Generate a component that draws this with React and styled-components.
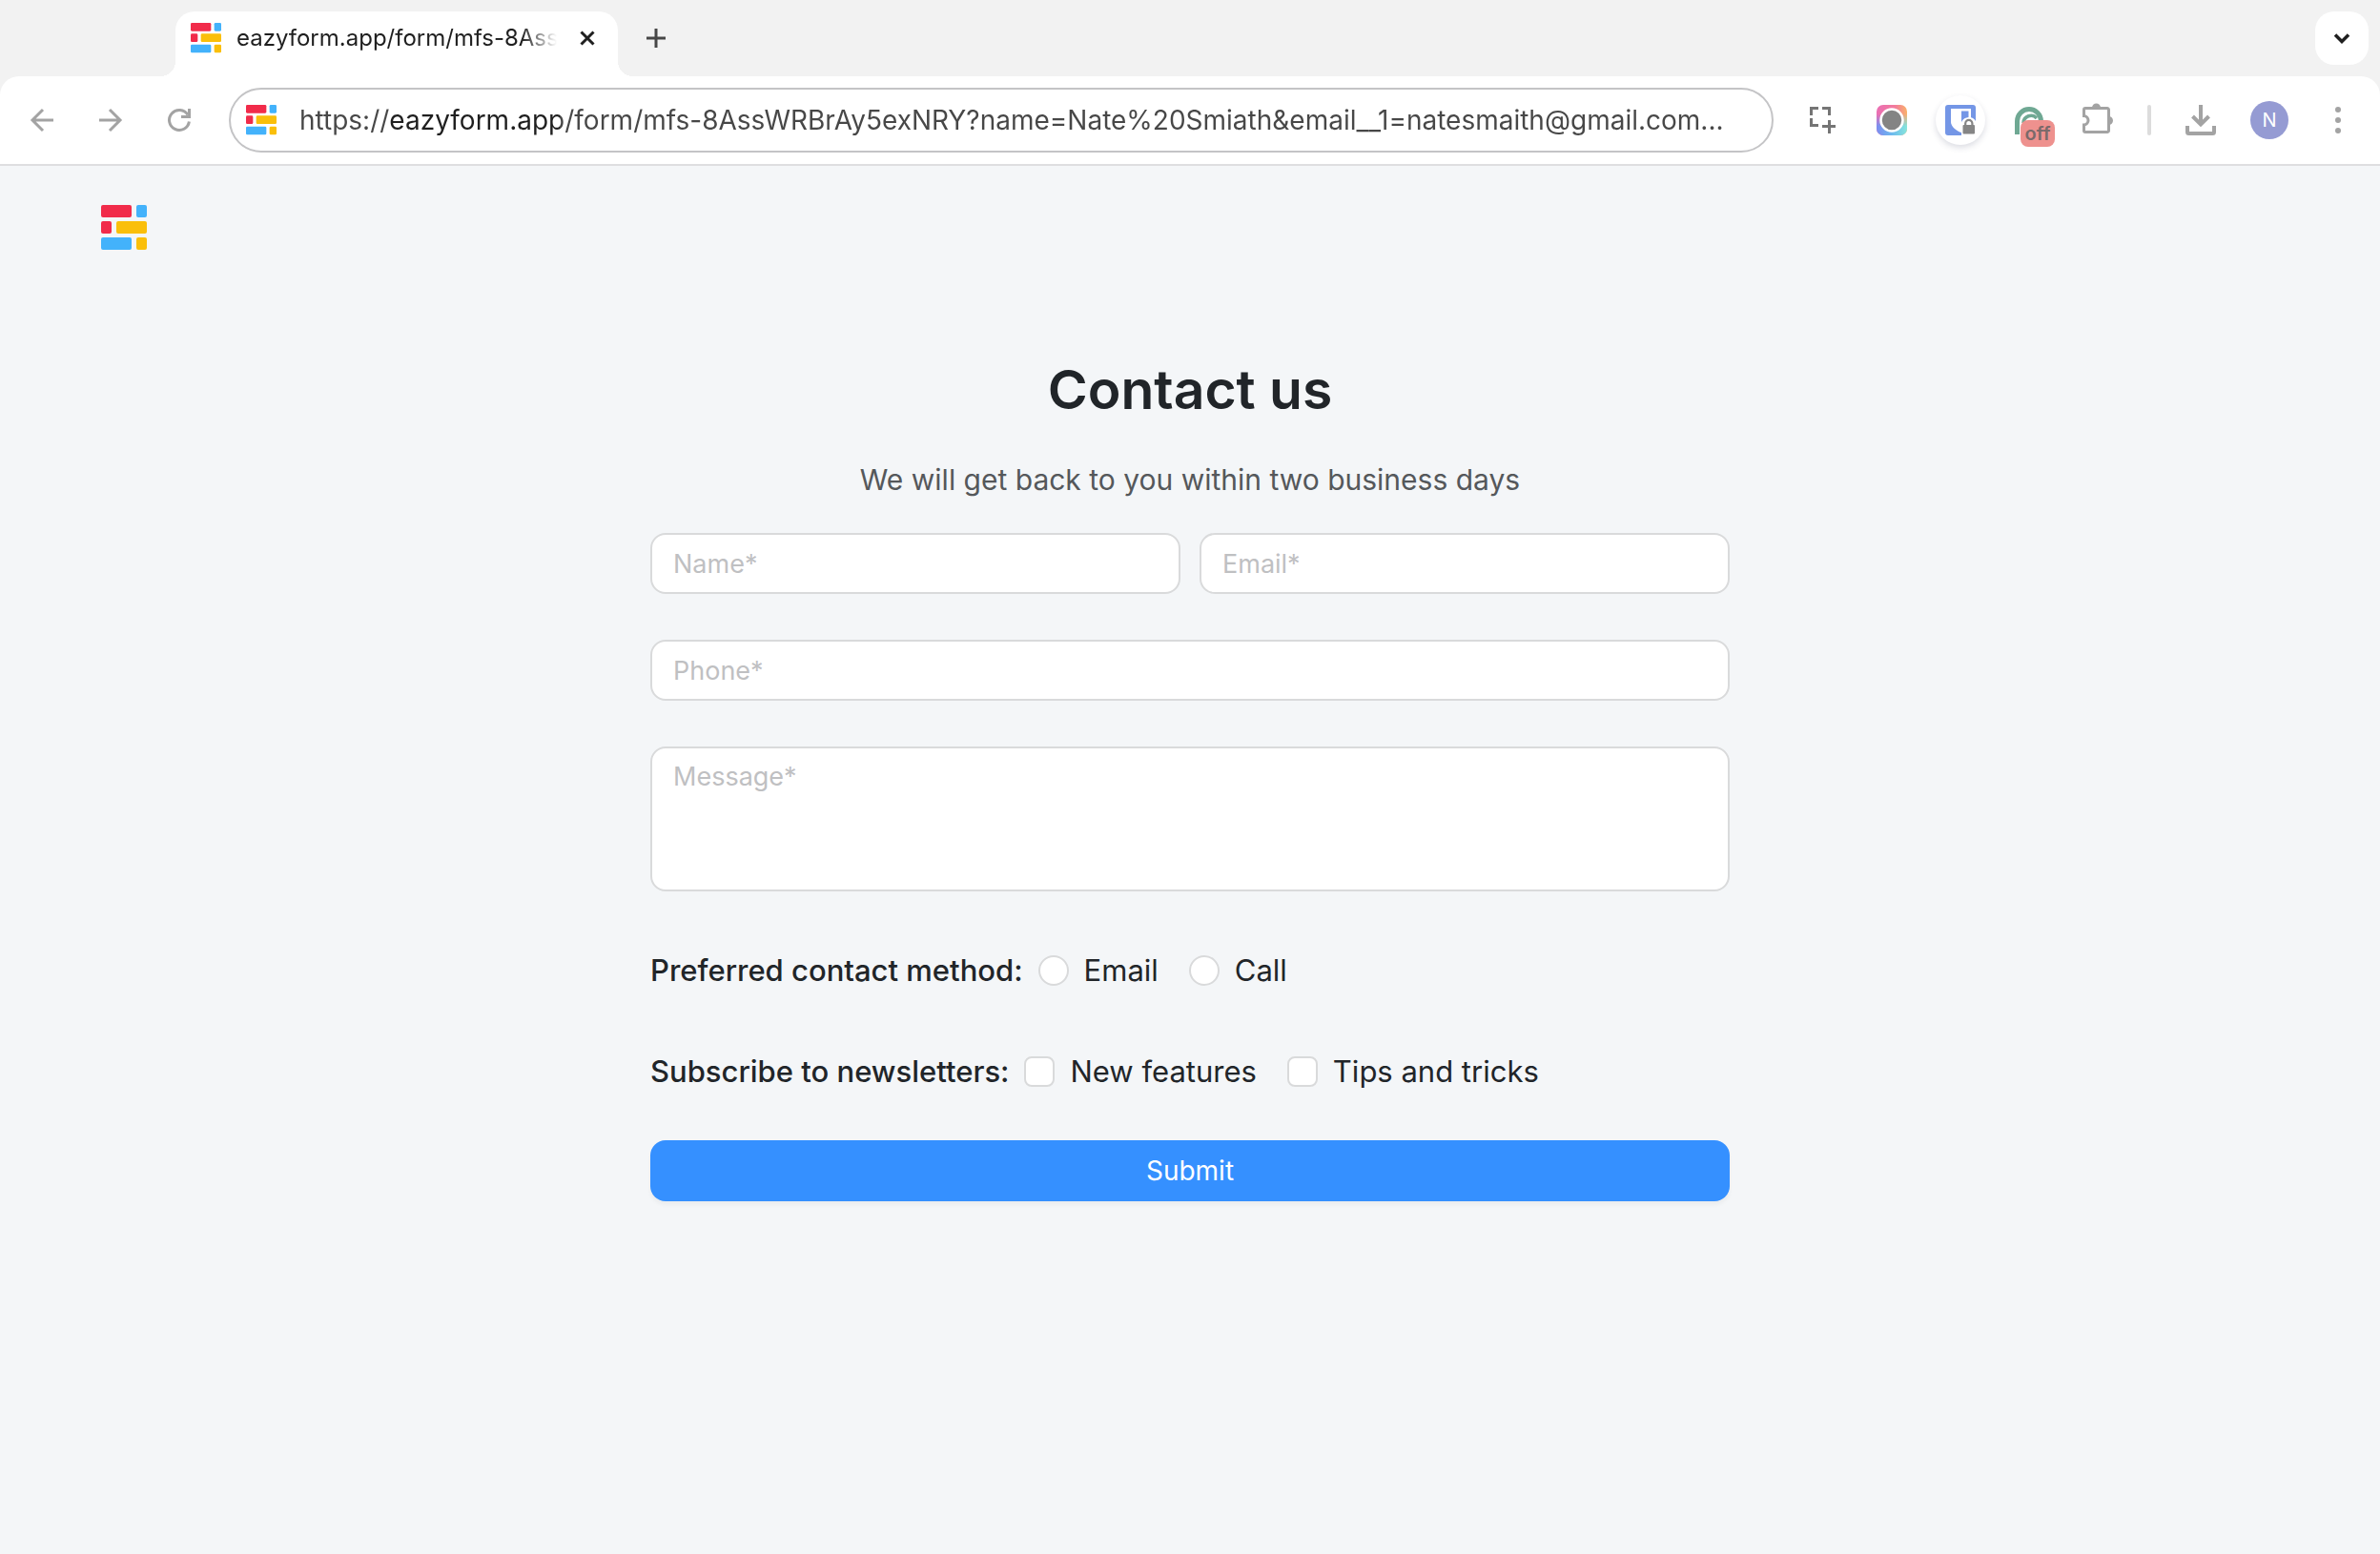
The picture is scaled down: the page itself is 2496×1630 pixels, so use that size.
import React, { useState } from 'react';
import styled, { createGlobalStyle } from 'styled-components';

const GlobalStyle = createGlobalStyle`
  * {
    box-sizing: border-box;
  }

  body {
    margin: 0;
    background-color: #f4f6f8;
    color: #212529;
    font-family: Inter, "Liberation Sans", sans-serif;
  }

  input, textarea, button {
    font-family: inherit;
  }
`;

/* ---------- browser bar ---------- */

const Browser = styled.header`
  background-color: #f2f2f2;
`;

const TabStrip = styled.div`
  display: flex;
  align-items: center;
  height: 80px;
  padding: 0 12px 0 184px;
`;

const Tab = styled.div`
  position: relative;
  align-self: flex-end;
  display: flex;
  align-items: center;
  width: 464px;
  height: 68px;
  padding: 0 16px 12px;
  border-radius: 20px 20px 0 0;
  background-color: #fff;

  &::before,
  &::after {
    content: "";
    position: absolute;
    bottom: 0;
    width: 16px;
    height: 16px;
  }

  &::before {
    right: 100%;
    background: radial-gradient(circle at 0 0, transparent 16px, #fff 16px);
  }

  &::after {
    left: 100%;
    background: radial-gradient(circle at 100% 0, transparent 16px, #fff 16px);
  }
`;

const TabTitle = styled.span`
  flex: 1;
  min-width: 0;
  margin: 0 16px;
  overflow: hidden;
  white-space: nowrap;
  font-size: 24px;
  line-height: 32px;
  color: #1f1f1f;
  mask-image: linear-gradient(90deg, #000 89%, transparent);
`;

const IconButton = styled.button`
  display: flex;
  align-items: center;
  justify-content: center;
  flex: none;
  width: ${props => props.$size || 32}px;
  height: ${props => props.$size || 32}px;
  padding: 0;
  border: none;
  border-radius: 50%;
  background: none;
  color: ${props => props.$color || '#a3a3a3'};
  cursor: pointer;

  svg {
    flex: none;
  }
`;

const NewTab = styled(IconButton)`
  margin-left: 24px;
`;

const TabSearch = styled(IconButton)`
  margin-left: auto;
  border-radius: 20px;
  background-color: #fff;
`;

const Toolbar = styled.div`
  display: flex;
  align-items: center;
  height: 94px;
  padding: 0 28px;
  border-bottom: 2px solid #dedee0;
  border-radius: 20px 20px 0 0;
  background-color: #fff;
`;

const Navigation = styled.nav`
  display: flex;
  gap: 40px;
`;

const Address = styled.div`
  flex: 1;
  display: flex;
  align-items: center;
  gap: 24px;
  height: 68px;
  margin: 0 36px;
  padding: 0 16px;
  border: 2px solid #c4c4c6;
  border-radius: 34px;
`;

/* host name is darker than the rest of the url */
const AddressInput = styled.input`
  flex: 1;
  min-width: 0;
  padding: 0;
  border: none;
  outline: none;
  font-size: 28px;
  line-height: 40px;
  color: transparent;
  background: linear-gradient(90deg, #474747 94px, #1f1f1f 94px, #1f1f1f 273px, #474747 273px);
  background-clip: text;
`;

const Extensions = styled.div`
  display: flex;
  align-items: center;
  gap: 40px;
`;

const RoundExtension = styled(IconButton)`
  margin: 0 -10px;
  box-shadow: 0 3px 6px rgba(60, 64, 100, 0.18);
`;

const BadgedExtension = styled(IconButton)`
  position: relative;
`;

const Badge = styled.span`
  position: absolute;
  top: 16px;
  left: 7px;
  width: 36px;
  height: 28px;
  border-radius: 8px;
  background-color: #ee918e;
  color: #7b6a6a;
  font-size: 20px;
  font-weight: 600;
  line-height: 28px;
  text-align: center;
`;

const Separator = styled.span`
  width: 4px;
  height: 32px;
  margin: 0 -4px;
  border-radius: 2px;
  background-color: #dcdcdc;
`;

const Avatar = styled(IconButton)`
  margin: 0 -4px;
  background-color: #959bd3;
  color: #fff;
  font-size: 20px;
`;

/* ---------- form page ---------- */

const Page = styled.main`
  padding: 0 32px 100px;
`;

const PageHeader = styled.div`
  display: flex;
  padding: 41px 74px 0;
`;

const Form = styled.form`
  display: flex;
  flex-direction: column;
  max-width: 1132px;
  margin: 0 auto;
`;

const Title = styled.h1`
  margin: 110px 0 0;
  font-size: 57px;
  font-weight: 600;
  line-height: 72px;
  text-align: center;
`;

const Subtitle = styled.p`
  margin: 38px 0 36px;
  font-size: 30px;
  line-height: 40px;
  text-align: center;
  color: #55585b;
`;

const Fields = styled.div`
  display: grid;
  grid-template-columns: 1fr 1fr;
  column-gap: 20px;
  row-gap: 48px;
`;

const Input = styled.input`
  width: 100%;
  height: 64px;
  grid-column: ${props => (props.$wide ? '1 / -1' : 'auto')};
  padding: 0 22px;
  border: 2px solid #d9dadb;
  border-radius: 16px;
  outline: none;
  background-color: #fff;
  color: inherit;
  font-size: 27px;

  &::placeholder {
    color: #bfc0c2;
    opacity: 1;
  }

  &:focus {
    border-color: #3590ff;
  }
`;

const TextArea = styled(Input)`
  display: block;
  height: 152px;
  padding: 12px 22px;
  line-height: 36px;
  resize: none;
`;

const Choices = styled.fieldset`
  display: flex;
  align-items: center;
  min-width: 0;
  margin: 60px 0 0;
  padding: 0;
  border: none;
  font-size: 31px;
  line-height: 46px;
`;

const Legend = styled.span`
  margin-right: 16px;
  font-weight: 500;
`;

const Choice = styled.label`
  display: flex;
  align-items: center;
  gap: 16px;
  margin-right: 32px;
`;

const Check = styled.input`
  appearance: none;
  width: 32px;
  height: 32px;
  margin: 0;
  border: 2px solid #d9dadb;
  border-radius: ${props => (props.type === 'radio' ? '50%' : '8px')};
  background-color: #fff;

  &:checked {
    border: 9px solid #3590ff;
  }
`;

const Submit = styled.button`
  height: 64px;
  margin-top: 49px;
  border: none;
  border-radius: 16px;
  background-color: #3590ff;
  box-shadow: 0 4px 4px rgba(0, 0, 0, 0.04);
  color: #fff;
  font-size: 28px;
  cursor: pointer;
`;

/* ---------- icons ---------- */

const Logo = ({ size }) => (
  <svg width={size} height={size} viewBox="0 0 48 48" aria-hidden="true">
    <rect x="0" y="0" width="32" height="13" rx="2" fill="#f12b4a" />
    <rect x="37" y="0" width="11" height="13" rx="2" fill="#43b2fb" />
    <rect x="0" y="17" width="11" height="13" rx="2" fill="#f12b4a" />
    <rect x="16" y="17" width="32" height="13" rx="2" fill="#fabf0a" />
    <rect x="0" y="34" width="32" height="13" rx="2" fill="#43b2fb" />
    <rect x="37" y="34" width="11" height="13" rx="2" fill="#fabf0a" />
  </svg>
);

const Stroke = ({ size = 32, width = 3, children }) => (
  <svg
    width={size}
    height={size}
    viewBox="0 0 32 32"
    fill="none"
    stroke="currentColor"
    strokeWidth={width}
    aria-hidden="true"
  >
    {children}
  </svg>
);

const BackIcon = () => (
  <Stroke>
    <path d="M28 16H6M17 5 6 16l11 11" />
  </Stroke>
);

const ForwardIcon = () => (
  <Stroke>
    <path d="M4 16h22M15 5l11 11-11 11" />
  </Stroke>
);

const ReloadIcon = () => (
  <Stroke>
    <path d="M26.400 17.500A10.500 10.500 0 1 1 25 10.500" />
    <path d="M26.500 4v8.500H18" />
  </Stroke>
);

const CloseIcon = () => (
  <Stroke>
    <path d="m9.500 9.500 13 13M22.500 9.500l-13 13" />
  </Stroke>
);

const PlusIcon = () => (
  <Stroke>
    <path d="M16 6v20M6 16h20" />
  </Stroke>
);

const ChevronIcon = () => (
  <Stroke width={3.5}>
    <path d="m9 12.500 7 7 7-7" />
  </Stroke>
);

const CaptureIcon = () => (
  <Stroke>
    <path d="M3.500 11V3.500H11M15 3.500h7.500V11M3.500 14v7.500H11M22.500 16v14M15 22.500h14" />
  </Stroke>
);

const CameraIcon = () => (
  <svg width="32" height="32" viewBox="0 0 32 32" aria-hidden="true">
    <defs>
      <linearGradient id="camTop" x1="0" y1="0" x2="1" y2="0">
        <stop offset="0" stopColor="#ea6fb4" />
        <stop offset="0.6" stopColor="#f27a9c" />
        <stop offset="1" stopColor="#f9b26a" />
      </linearGradient>
      <linearGradient id="camBottom" x1="0" y1="0" x2="1" y2="0">
        <stop offset="0" stopColor="#7d8cf0" />
        <stop offset="0.5" stopColor="#6cb9ee" />
        <stop offset="1" stopColor="#86e6dc" />
      </linearGradient>
      <linearGradient id="camFade" x1="0" y1="0" x2="0" y2="1">
        <stop offset="0.3" stopColor="#fff" stopOpacity="0" />
        <stop offset="0.7" stopColor="#fff" />
      </linearGradient>
      <mask id="camMask">
        <rect width="32" height="32" fill="url(#camFade)" />
      </mask>
    </defs>
    <rect width="32" height="32" rx="7" fill="url(#camTop)" />
    <rect width="32" height="32" rx="7" fill="url(#camBottom)" mask="url(#camMask)" />
    <circle cx="16" cy="16" r="11.500" fill="#848484" stroke="#fff" strokeWidth="2.500" />
  </svg>
);

const ShieldIcon = () => (
  <svg width="32" height="32" viewBox="0 0 32 32" aria-hidden="true">
    <rect width="32" height="32" rx="3" fill="#7496e6" />
    <path d="M6 4h21v14c0 5-6 9-10.500 11C12 27 6 23 6 18z" fill="#fff" />
    <path d="M17 6.500h7.500V18c0 3-3.500 6-7.500 8z" fill="#7496e6" />
    <path d="M17 19h15v13H17z" fill="#fff" />
    <path d="M16.500 20a8.500 8.500 0 0 1 15.500-3v5H16.500z" fill="#fff" />
    <rect x="18.500" y="21" width="12.500" height="9.500" rx="1" fill="#858585" />
    <path d="M21.200 21v-1.500a3.600 3.600 0 0 1 7.200 0V21" fill="none" stroke="#858585" strokeWidth="2.200" />
  </svg>
);

const ArcIcon = () => (
  <svg width="32" height="32" viewBox="0 0 32 32" fill="none" stroke="#6fa893" aria-hidden="true">
    <path d="M3.500 31V17a12.500 12.500 0 0 1 25 0" strokeWidth="5" />
    <path d="M10 19a8 8 0 0 1 14-5" strokeWidth="3.500" />
  </svg>
);

const PuzzleIcon = () => (
  <svg width="36" height="36" viewBox="0 0 36 36" aria-hidden="true">
    <path d="M12 5a4.500 4.500 0 0 1 9 0zM29.500 14a4.500 4.500 0 0 1 0 9z" fill="#a3a3a3" />
    <path
      d="M5 5.500h23a1.500 1.500 0 0 1 1.500 1.500v22a1.500 1.500 0 0 1-1.500 1.500H5A1.500 1.500 0 0 1 3.500 29v-6c6-.5 6-9 0-9.500V7A1.500 1.500 0 0 1 5 5.500z"
      fill="none"
      stroke="#a3a3a3"
      strokeWidth="3"
    />
  </svg>
);

const DownloadIcon = () => (
  <Stroke width={4}>
    <path d="M16 0v20M7.500 12l8.500 8.500 8.500-8.500" />
    <path d="M2 22v6.500a1.500 1.500 0 0 0 1.500 1.500h25a1.500 1.500 0 0 0 1.500-1.500V22" />
  </Stroke>
);

const DotsIcon = () => (
  <svg width="8" height="32" viewBox="0 0 8 32" fill="#a3a3a3" aria-hidden="true">
    <circle cx="4" cy="5" r="3" />
    <circle cx="4" cy="16" r="3" />
    <circle cx="4" cy="27" r="3" />
  </svg>
);


const App = () => {
  const [formData, setFormData] = useState({
    name: '',
    email: '',
    phone: '',
    message: '',
  });

  const handleChange = (event) => {
    const { name, value } = event.target;
    setFormData((prevFormData) => ({
      ...prevFormData,
      [name]: value,
    }));
  };

  const handleSubmit = (event) => {
    event.preventDefault();
  };

  return (
    <>
      <GlobalStyle />
      <Browser>
        <TabStrip>
          <Tab>
            <Logo size={32} />
            <TabTitle>eazyform.app/form/mfs-8AssW</TabTitle>
            <IconButton $color="#1f1f1f" aria-label="Close tab"><CloseIcon /></IconButton>
          </Tab>
          <NewTab $color="#474747" aria-label="New tab"><PlusIcon /></NewTab>
          <TabSearch $size={56} $color="#1f1f1f" aria-label="Search tabs"><ChevronIcon /></TabSearch>
        </TabStrip>
        <Toolbar>
          <Navigation>
            <IconButton aria-label="Back"><BackIcon /></IconButton>
            <IconButton aria-label="Forward"><ForwardIcon /></IconButton>
            <IconButton aria-label="Reload"><ReloadIcon /></IconButton>
          </Navigation>
          <Address>
            <Logo size={32} />
            <AddressInput
              type="text"
              aria-label="Address"
              defaultValue="https://eazyform.app/form/mfs-8AssWRBrAy5exNRY?name=Nate%20Smiath&email__1=natesmaith@gmail.com..."
            />
          </Address>
          <Extensions>
            <IconButton $color="#757575" aria-label="Capture"><CaptureIcon /></IconButton>
            <IconButton aria-label="Camera"><CameraIcon /></IconButton>
            <RoundExtension $size={52} aria-label="Passwords"><ShieldIcon /></RoundExtension>
            <BadgedExtension aria-label="Writing helper">
              <ArcIcon />
              <Badge>off</Badge>
            </BadgedExtension>
            <IconButton aria-label="Extensions"><PuzzleIcon /></IconButton>
            <Separator />
            <IconButton aria-label="Downloads"><DownloadIcon /></IconButton>
            <Avatar $size={40} $color="#fff">N</Avatar>
            <IconButton aria-label="Menu"><DotsIcon /></IconButton>
          </Extensions>
        </Toolbar>
      </Browser>

      <Page>
        <PageHeader>
          <Logo size={48} />
        </PageHeader>
        <Form onSubmit={handleSubmit}>
          <Title>Contact us</Title>
          <Subtitle>We will get back to you within two business days</Subtitle>
          <Fields>
            <Input type="text" name="name" placeholder="Name*" aria-label="Name" value={formData.name} onChange={handleChange} />
            <Input type="email" name="email" placeholder="Email*" aria-label="Email" value={formData.email} onChange={handleChange} />
            <Input $wide type="tel" name="phone" placeholder="Phone*" aria-label="Phone" value={formData.phone} onChange={handleChange} />
            <TextArea $wide as="textarea" name="message" placeholder="Message*" aria-label="Message" value={formData.message} onChange={handleChange} />
          </Fields>
          <Choices aria-labelledby="method">
            <Legend id="method">Preferred contact method:</Legend>
            <Choice><Check type="radio" name="method" value="email" />Email</Choice>
            <Choice><Check type="radio" name="method" value="call" />Call</Choice>
          </Choices>
          <Choices aria-labelledby="newsletters">
            <Legend id="newsletters">Subscribe to newsletters:</Legend>
            <Choice><Check type="checkbox" name="features" />New features</Choice>
            <Choice><Check type="checkbox" name="tips" />Tips and tricks</Choice>
          </Choices>
          <Submit type="submit">Submit</Submit>
        </Form>
      </Page>
    </>
  );
};

export default App;
